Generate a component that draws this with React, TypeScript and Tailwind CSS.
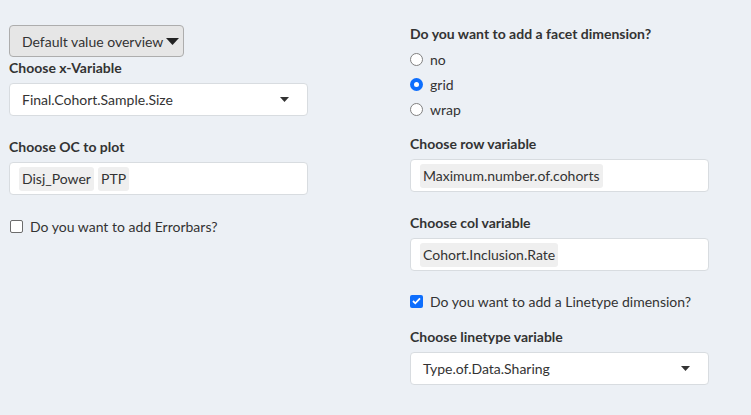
import React from 'react'

const font = { fontFamily: 'Lato, "Open Sans", sans-serif' }

const Label: React.FC<{ text: string; className?: string }> = ({ text, className }) => (
  <div className={`h-5 text-[14px] font-bold leading-5 text-[#333] ${className ?? ''}`}>{text}</div>
)

const Caret: React.FC<{ className?: string }> = ({ className }) => (
  <svg width="9" height="5" viewBox="0 0 9 5" className={className}>
    <path d="M0 0h9L4.5 5z" fill="#333" />
  </svg>
)

const SelectBox: React.FC<{ value: string }> = ({ value }) => (
  <div className="mt-[5px] flex h-[33px] w-[299px] items-center justify-between rounded-[4px] border border-[#d8dce0] bg-white pl-[12px] pr-[18px] text-[14px] text-[#333]">
    <span>{value}</span>
    <Caret />
  </div>
)

const TagBox: React.FC<{ tags: string[] }> = ({ tags }) => (
  <div className="mt-[5px] flex h-[33px] w-[299px] items-center gap-1 rounded-[4px] border border-[#d8dce0] bg-white pl-[9px] text-[14px] text-[#333]">
    {tags.map(t => (
      <span key={t} className="flex h-6 items-center rounded-[3px] bg-[#efefef] px-[3px]">
        {t}
      </span>
    ))}
  </div>
)

const Check: React.FC<{ checked?: boolean; label: string; className?: string }> = ({ checked, label, className }) => (
  <div className={`flex h-5 items-center gap-[7px] text-[14px] text-[#333] ${className ?? ''}`}>
    {checked ? (
      <span className="flex h-[13px] w-[13px] items-center justify-center rounded-[2px] bg-[#0d6efd]">
        <svg width="9" height="8" viewBox="0 0 9 8">
          <path d="M1 4l2.3 2.3L8 1.3" stroke="white" strokeWidth="1.8" fill="none" />
        </svg>
      </span>
    ) : (
      <span className="h-[13px] w-[13px] rounded-[2px] border-[1.5px] border-[#6c6c6c] bg-white" />
    )}
    <span>{label}</span>
  </div>
)

const Radio: React.FC<{ checked?: boolean; label: string }> = ({ checked, label }) => (
  <div className="flex h-5 items-center gap-[7px] text-[14px] text-[#333]">
    {checked ? (
      <span className="flex h-[13px] w-[13px] items-center justify-center rounded-full bg-[#0d6efd]">
        <span className="h-[5px] w-[5px] rounded-full bg-white" />
      </span>
    ) : (
      <span className="h-[13px] w-[13px] rounded-full border-[1.5px] border-[#808080] bg-white" />
    )}
    <span>{label}</span>
  </div>
)

export default function App() {
  return (
    <div className="flex h-[415px] w-[751px] bg-[#ecf0f5]" style={font}>
      <div className="ml-[9px] flex w-[299px] flex-col pt-[25px]">
        <button
          type="button"
          className="flex h-8 w-[175px] items-center gap-[3px] rounded-[4px] border border-[#adadad] bg-[#e6e6e6] pl-[12px] text-[14px] text-[#333]"
        >
          <span>Default value overview</span>
          <svg width="13" height="7" viewBox="0 0 13 7">
            <path d="M0 0h13L6.5 7z" fill="#222" />
          </svg>
        </button>
        <Label text="Choose x-Variable" className="mt-[1px]" />
        <SelectBox value="Final.Cohort.Sample.Size" />
        <Label text="Choose OC to plot" className="mt-[21px]" />
        <TagBox tags={['Disj_Power', 'PTP']} />
        <Check label="Do you want to add Errorbars?" className="mt-[21px] ml-[1px]" />
      </div>
      <div className="ml-[102px] flex w-[299px] flex-col pt-[24px]">
        <Label text="Do you want to add a facet dimension?" />
        <div className="mt-[5px] flex flex-col gap-[5px]">
          <Radio label="no" />
          <Radio label="grid" checked />
          <Radio label="wrap" />
        </div>
        <Label text="Choose row variable" className="mt-[15px]" />
        <TagBox tags={['Maximum.number.of.cohorts']} />
        <Label text="Choose col variable" className="mt-[21px]" />
        <TagBox tags={['Cohort.Inclusion.Rate']} />
        <Check label="Do you want to add a Linetype dimension?" checked className="mt-[20px]" />
        <Label text="Choose linetype variable" className="mt-[16px]" />
        <SelectBox value="Type.of.Data.Sharing" />
      </div>
    </div>
  )
}
